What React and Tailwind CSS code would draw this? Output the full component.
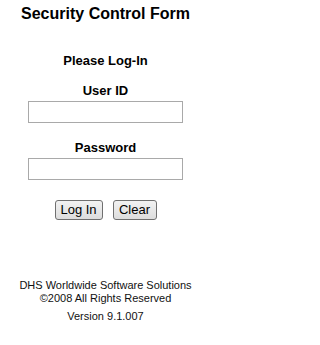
import React, { useState } from "react";

const App = () => {
  const [userId, setUserId] = useState("");
  const [password, setPassword] = useState("");

  const clearForm = () => {
    setUserId("");
    setPassword("");
  };

  return (
    <div className="w-[219px] h-[345px] bg-white pr-2 font-['Liberation_Sans',Arial,sans-serif] text-black text-center">
      <div className="pt-[5px] text-[16px] leading-[18px] font-bold">Security Control Form</div>
      <div className="mt-[30px] text-[13px] leading-[15px] font-bold">Please Log-In</div>
      <div className="mt-[15px] text-[13px] leading-[15px] font-bold">User ID</div>
      <div className="mt-[3px] flex justify-center">
        <input
          type="text"
          value={userId}
          onChange={(e) => setUserId(e.target.value)}
          className="w-[155px] h-[22px] border border-[#a9a9a9] bg-white px-1 text-[13px] outline-none"
        />
      </div>
      <div className="mt-[17px] text-[13px] leading-[15px] font-bold">Password</div>
      <div className="mt-[3px] flex justify-center">
        <input
          type="password"
          value={password}
          onChange={(e) => setPassword(e.target.value)}
          className="w-[155px] h-[22px] border border-[#a9a9a9] bg-white px-1 text-[13px] outline-none"
        />
      </div>
      <div className="mt-[20px] flex justify-center gap-[10px]">
        <button className="w-[48px] h-[20px] rounded-[3px] border border-[#707070] bg-gradient-to-b from-[#f2f2f2] to-[#dddddd] text-[13px] leading-[18px]">
          Log In
        </button>
        <button
          onClick={clearForm}
          className="w-[44px] h-[20px] rounded-[3px] border border-[#707070] bg-gradient-to-b from-[#f2f2f2] to-[#dddddd] text-[13px] leading-[18px]"
        >
          Clear
        </button>
      </div>
      <div className="mt-[59px] text-[11px] leading-[13px] text-[#111]">
        <div>DHS Worldwide Software Solutions</div>
        <div>©2008 All Rights Reserved</div>
        <div className="mt-[5px]">Version 9.1.007</div>
      </div>
    </div>
  );
};

export default App;
